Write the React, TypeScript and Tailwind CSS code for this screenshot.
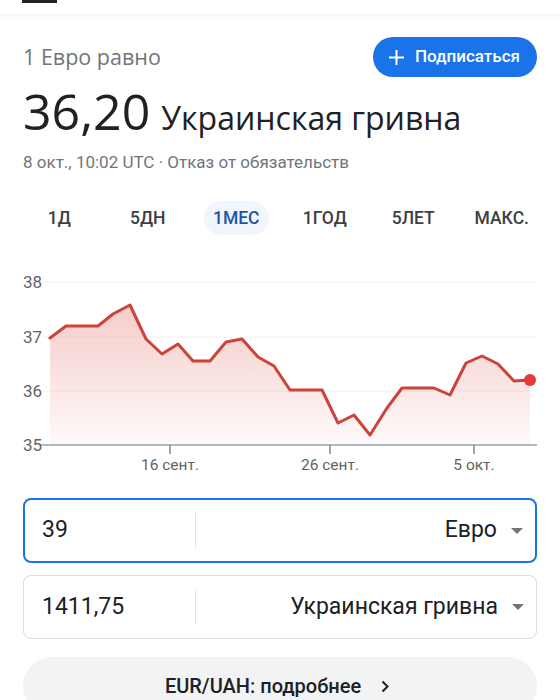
import React from 'react';

const font = { fontFamily: 'Roboto, "Noto Sans", sans-serif' };
const display = { fontFamily: '"Open Sans", Roboto, sans-serif' };

const ranges = ['1Д', '5ДН', '1МЕС', '1ГОД', '5ЛЕТ', 'МАКС.'];

// month of EUR/UAH closes, already in chart coordinates
const points: [number, number][] = [
  [50, 337], [66, 325], [98, 325], [113, 313], [130, 304], [146, 338], [162, 353],
  [178, 343], [193, 360], [210, 360], [226, 341], [242, 338], [258, 356], [274, 365],
  [290, 389], [322, 389], [338, 422], [354, 414], [370, 434], [387, 407], [402, 387],
  [434, 387], [450, 394], [466, 362], [482, 355], [498, 363], [514, 380], [530, 379],
];

const yTicks = [
  { label: '38', y: 281 },
  { label: '37', y: 336 },
  { label: '36', y: 390 },
  { label: '35', y: 444 },
];

const xTicks = [
  { label: '16 сент.', x: 170 },
  { label: '26 сент.', x: 330 },
  { label: '5 окт.', x: 474 },
];

function RateChart() {
  const line = points.map(([x, y]) => `${x},${y}`).join(' ');
  const area = `50,444 ${line} 530,444`;
  const last = points[points.length - 1];

  return (
    <svg width={560} height={240} viewBox="0 240 560 240" className="block">
      <defs>
        <linearGradient id="rateFill" x1="0" y1="0" x2="0" y2="1">
          <stop offset="0%" stopColor="#e0534a" stopOpacity={0.3} />
          <stop offset="100%" stopColor="#e0534a" stopOpacity={0.03} />
        </linearGradient>
      </defs>
      {yTicks.slice(0, 3).map((t) => (
        <line key={t.label} x1={42} x2={537} y1={t.y} y2={t.y} stroke="#f0f0f0" strokeWidth={1} />
      ))}
      <polygon points={area} fill="url(#rateFill)" />
      <polyline points={line} fill="none" stroke="#cc433a" strokeWidth={3} strokeLinejoin="round" strokeLinecap="round" />
      <line x1={40} x2={537} y1={444} y2={444} stroke="#9aa0a6" strokeWidth={1.5} />
      {xTicks.map((t) => (
        <g key={t.label}>
          <line x1={t.x} x2={t.x} y1={444} y2={453} stroke="#80868b" strokeWidth={1.5} />
          <text x={t.x} y={469} textAnchor="middle" fontSize={15.5} fill="#5f6368" style={font}>
            {t.label}
          </text>
        </g>
      ))}
      {yTicks.map((t) => (
        <text key={t.label} x={23} y={t.y + 6} fontSize={17} fill="#5f6368" style={font}>
          {t.label}
        </text>
      ))}
      <circle cx={last[0]} cy={last[1]} r={6} fill="#e53935" />
    </svg>
  );
}

function Caret() {
  return (
    <svg width="12" height="6" viewBox="0 0 12 6" className="shrink-0">
      <path d="M0 0h12L6 6z" fill="#70757a" />
    </svg>
  );
}

function CurrencyRow({ amount, currency, active }: { amount: string; currency: string; active?: boolean }) {
  return (
    <div
      className={
        active
          ? 'flex h-[65px] items-center rounded-[8px] border-2 border-[#1a73e8]'
          : 'flex h-[64px] items-center rounded-[8px] border border-[#dadce0]'
      }
    >
      <div className={active ? 'w-[170px] pl-[17px] text-[23px] text-[#202124]' : 'w-[171px] pl-[18px] text-[23px] text-[#202124]'}>
        {amount}
      </div>
      <div className="h-[36px] w-px bg-[#e3e3e3]" />
      <div className="flex flex-1 items-center justify-end gap-[14px] pr-[12px] text-[23px] text-[#202124]">
        {currency}
        <Caret />
      </div>
    </div>
  );
}

export default function App() {
  return (
    <div className="h-[700px] w-[560px] overflow-hidden bg-white" style={font}>
      <div className="h-[14px] bg-white shadow-[0_2px_3px_rgba(0,0,0,0.05)]">
        <div className="ml-[22px] h-[3px] w-[35px] bg-[#202124]" />
      </div>

      <div className="px-[23px]">
        <div className="mt-[23px] flex items-center justify-between">
          <span className="text-[21.5px] text-[#70757a]" style={display}>1 Евро равно</span>
          <button className="flex h-[40px] items-center gap-[11px] rounded-full bg-[#1a73e8] pl-[16px] pr-[17px] text-[17px] font-medium text-white">
            <svg width="15" height="15" viewBox="0 0 15 15">
              <path d="M7.5 0v15M0 7.5h15" stroke="white" strokeWidth="2" />
            </svg>
            Подписаться
          </button>
        </div>

        <div className="mt-[10px] flex items-baseline gap-[11px] leading-[48px] text-[#202124]" style={display}>
          <span className="text-[50px]">36,20</span>
          <span className="text-[32px]">Украинская гривна</span>
        </div>

        <div className="mt-[10px] text-[17px] leading-[20px] text-[#70757a]">
          8 окт., 10:02 UTC · Отказ от обязательств
        </div>
      </div>

      <div className="ml-[15px] mt-[29px] grid w-[531px] grid-cols-6">
        {ranges.map((r) => (
          <div key={r} className="flex h-[34px] items-center justify-center">
            {r === '1МЕС' ? (
              <span className="flex h-[34px] items-center rounded-full bg-[#f1f5fc] px-[9px] text-[17.5px] font-medium text-[#1a56b0]">
                {r}
              </span>
            ) : (
              <span className="text-[17.5px] font-medium text-[#3c4043]">{r}</span>
            )}
          </div>
        ))}
      </div>

      <div className="mt-[6px]">
        <RateChart />
      </div>

      <div className="mt-[17px] flex flex-col gap-[12px] px-[23px]">
        <CurrencyRow amount="39" currency="Евро" active />
        <CurrencyRow amount="1411,75" currency="Украинская гривна" />
        <div className="mt-[6px] flex h-[58px] items-center justify-center gap-[20px] rounded-full bg-[#f1f3f4] pr-[6px] text-[20px] font-medium text-[#202124]">
          EUR/UAH: подробнее
          <svg width="8" height="13" viewBox="0 0 8 13">
            <path d="M1.5 1.5l5 5-5 5" fill="none" stroke="#202124" strokeWidth="2" />
          </svg>
        </div>
      </div>
    </div>
  );
}
